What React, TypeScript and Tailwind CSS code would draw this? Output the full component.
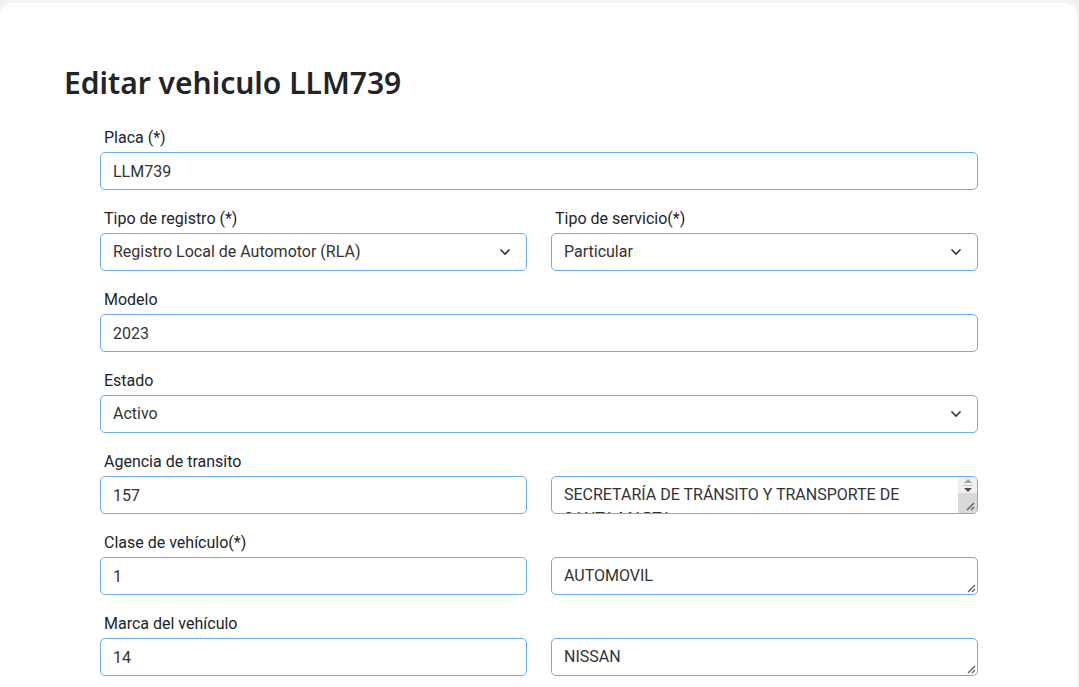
import React from "react";

const inputCls =
  "block w-full h-[38px] rounded-[5px] border border-[#6aaef0] bg-white px-3 text-[16px] text-[#333] outline-none";

function Label({ children }: { children: React.ReactNode }) {
  return (
    <label className="block h-6 pl-1 text-[16px] leading-6 text-[#212529] mb-0.5">
      {children}
    </label>
  );
}

function Chevron() {
  return (
    <svg
      width="12"
      height="8"
      viewBox="0 0 12 8"
      className="absolute right-[16px] top-[15px] pointer-events-none"
    >
      <path d="M1.5 1.5 6 6l4.5-4.5" fill="none" stroke="#333" strokeWidth="1.6" />
    </svg>
  );
}

function SelectBox({ value }: { value: string }) {
  return (
    <div className="relative">
      <div className={inputCls + " flex items-center pr-10"}>{value}</div>
      <Chevron />
    </div>
  );
}

function TextInput({ value }: { value: string }) {
  return <input readOnly value={value} className={inputCls} />;
}

function Grip() {
  return (
    <svg width="9" height="9" viewBox="0 0 9 9" className="absolute right-[2px] bottom-[2px]">
      <path d="M8 1 1 8M8 5 5 8" stroke="#555" strokeWidth="1.2" />
    </svg>
  );
}

function TextArea({ value, scroll }: { value: string; scroll?: boolean }) {
  return (
    <div className="relative">
      <textarea
        readOnly
        value={value}
        rows={1}
        className={
          "block w-full h-[38px] resize-none overflow-hidden rounded-[5px] border border-[#6aaef0] bg-white pl-3 py-[6px] text-[16px] leading-6 text-[#333] outline-none " +
          (scroll ? "pr-[30px]" : "pr-3")
        }
      />
      {scroll ? (
        <div className="absolute right-[1px] top-[1px] bottom-[1px] w-[19px] flex flex-col rounded-tr-[4px] rounded-br-[4px] overflow-hidden">
          <div className="h-[16px] bg-[#f0f0f0] flex flex-col items-center justify-center gap-[2px]">
            <svg width="8" height="4" viewBox="0 0 8 4">
              <path d="M0 4 4 0l4 4z" fill="#a3a3a3" />
            </svg>
            <div className="w-[11px] h-px bg-[#c8c8c8]" />
            <svg width="8" height="4" viewBox="0 0 8 4">
              <path d="M0 0h8L4 4z" fill="#505050" />
            </svg>
          </div>
          <div className="relative flex-1 bg-[#d9d9d9]">
            <Grip />
          </div>
        </div>
      ) : (
        <Grip />
      )}
    </div>
  );
}

export default function App() {
  return (
    <div
      className="min-h-[687px] bg-[#f3f3f3] pt-[3px] pr-[2px]"
      style={{ fontFamily: "Roboto, 'Liberation Sans', sans-serif" }}
    >
      <div className="min-h-[684px] rounded-t-xl bg-white pt-[60px]">
        <h1
          className="ml-[64px] text-[30px] font-semibold leading-10 text-[#212529]"
          style={{ fontFamily: "'Noto Sans', 'Open Sans', sans-serif" }}
        >
          Editar vehiculo LLM739
        </h1>
        <form className="ml-[100px] mt-[23px] w-[878px]">
          <div className="mb-[17px]">
            <Label>Placa (*)</Label>
            <TextInput value="LLM739" />
          </div>
          <div className="mb-[17px] grid grid-cols-2 gap-x-6">
            <div>
              <Label>Tipo de registro (*)</Label>
              <SelectBox value="Registro Local de Automotor (RLA)" />
            </div>
            <div>
              <Label>Tipo de servicio(*)</Label>
              <SelectBox value="Particular" />
            </div>
          </div>
          <div className="mb-[17px]">
            <Label>Modelo</Label>
            <TextInput value="2023" />
          </div>
          <div className="mb-[17px]">
            <Label>Estado</Label>
            <SelectBox value="Activo" />
          </div>
          <div className="mb-[17px]">
            <Label>Agencia de transito</Label>
            <div className="grid grid-cols-2 gap-x-6">
              <TextInput value="157" />
              <TextArea value="SECRETARÍA DE TRÁNSITO Y TRANSPORTE DE SANTA MARTA" scroll />
            </div>
          </div>
          <div className="mb-[17px]">
            <Label>Clase de vehículo(*)</Label>
            <div className="grid grid-cols-2 gap-x-6">
              <TextInput value="1" />
              <TextArea value="AUTOMOVIL" />
            </div>
          </div>
          <div className="mb-[17px]">
            <Label>Marca del vehículo</Label>
            <div className="grid grid-cols-2 gap-x-6">
              <TextInput value="14" />
              <TextArea value="NISSAN" />
            </div>
          </div>
        </form>
      </div>
    </div>
  );
}
